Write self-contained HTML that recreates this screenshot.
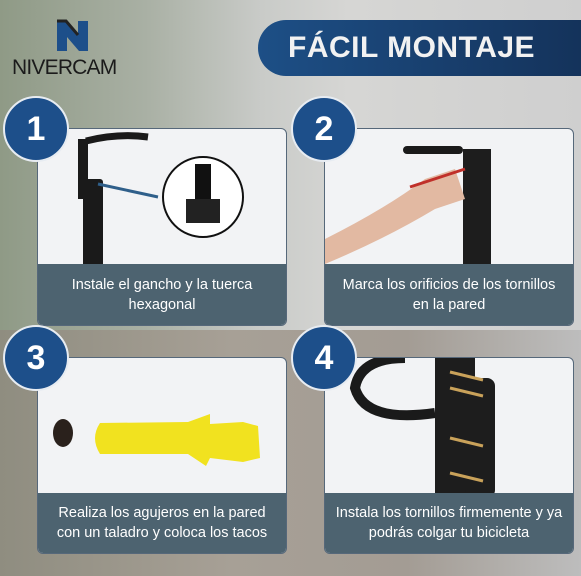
<!DOCTYPE html><html><head><style>
body{margin:0;width:581px;height:576px;overflow:hidden;position:relative;font-family:"Liberation Sans",sans-serif;
background:linear-gradient(90deg,#8f9a86 0%,#a9b0a4 25%,#c9cbc8 45%,#d6d6d4 60%,#cfcfcf 100%);}
.bg2{position:absolute;left:0;top:330px;width:581px;height:246px;background:linear-gradient(90deg,#8f8d80,#a7a096 40%,#a39c94 70%,#bdbdbd);}
.title{position:absolute;left:258px;top:20px;width:330px;height:56px;border-radius:28px 0 0 28px;background:linear-gradient(90deg,#1d4f86,#14325a);color:#f2f2f2;font-weight:bold;font-size:30px;line-height:56px;padding-left:30px;box-sizing:border-box;letter-spacing:0.5px}
.logo{position:absolute;left:12px;top:56px;font-size:21px;color:#1b1b1b;letter-spacing:-0.8px}
.panel{position:absolute;width:250px;background:#f2f3f5;border:1px solid #56687a;border-radius:6px;overflow:hidden;box-sizing:border-box}
.cap{position:absolute;left:0;right:0;bottom:0;background:#4d6370;color:#fff;font-size:14.5px;text-align:center;line-height:20px;display:flex;align-items:center;justify-content:center}
.num{position:absolute;width:62px;height:62px;border-radius:50%;background:#1d4f8a;border:2px solid #e7ecf2;color:#fff;font-weight:bold;font-size:34px;text-align:center;line-height:62px;box-sizing:content-box}
</style></head><body>
<div class="bg2"></div>
<svg style="position:absolute;left:55px;top:17px" width="36" height="36"><path d="M2 4h9l12 14V4h10v30h-9L12 20v14H2z" fill="#1d4f8a"/><path d="M2 4h9l12 14" fill="none" stroke="#222" stroke-width="3"/></svg>
<div class="logo">NIVERCAM</div>
<div class="title">FÁCIL MONTAJE</div>

<div class="panel" style="left:37px;top:128px;height:198px">
<svg width="250" height="140" style="position:absolute;left:0;top:0">
<rect x="40" y="10" width="10" height="60" fill="#1a1a1a"/><rect x="45" y="50" width="20" height="105" rx="3" fill="#1a1a1a"/>
<path d="M48 12 Q80 4 110 8" stroke="#1a1a1a" stroke-width="7" fill="none"/>
<path d="M60 55 L120 68" stroke="#2f5f8a" stroke-width="3"/>
<circle cx="165" cy="68" r="40" fill="#fff" stroke="#111" stroke-width="2"/>
<rect x="157" y="35" width="16" height="35" fill="#111"/><rect x="148" y="70" width="34" height="24" fill="#222"/>
</svg>
<div class="cap" style="height:61px">Instale el gancho y la tuerca<br>hexagonal</div></div>

<div class="panel" style="left:324px;top:128px;height:198px">
<svg width="250" height="140" style="position:absolute;left:0;top:0">
<rect x="78" y="17" width="60" height="8" rx="4" fill="#1a1a1a"/><rect x="138" y="20" width="28" height="115" fill="#1d1d1d"/>
<path d="M0 110 Q60 80 100 50 L130 40 L140 70 L110 80 Q60 110 0 135z" fill="#e2b9a2"/>
<path d="M85 58 L140 40" stroke="#c0302a" stroke-width="3"/>
</svg>
<div class="cap" style="height:61px">Marca los orificios de los tornillos<br>en la pared</div></div>

<div class="panel" style="left:37px;top:357px;height:197px">
<svg width="250" height="140" style="position:absolute;left:0;top:0">
<ellipse cx="25" cy="75" rx="10" ry="14" fill="#2a211c"/>
<path d="M62 65 L150 64 L172 56 L172 66 L205 64 L220 68 L222 100 L205 104 L172 100 L168 108 L150 96 L62 96 Q52 80 62 65z" fill="#f1e21f"/>
</svg>
<div class="cap" style="height:60px">Realiza los agujeros en la pared<br>con un taladro y coloca los tacos</div></div>

<div class="panel" style="left:324px;top:357px;height:197px">
<svg width="250" height="140" style="position:absolute;left:0;top:0">
<path d="M110 55 Q40 65 30 30 Q35 0 80 0" stroke="#1a1a1a" stroke-width="10" fill="none"/>
<rect x="110" y="0" width="40" height="140" fill="#1d1d1d"/><rect x="140" y="20" width="30" height="120" rx="8" fill="#1d1d1d"/>
<g stroke="#c9a25a" stroke-width="3"><path d="M125 14L158 22M125 30L158 38M125 80L158 88M125 115L158 123"/></g>
</svg>
<div class="cap" style="height:60px">Instala los tornillos firmemente y ya<br>podrás colgar tu bicicleta</div></div>

<div class="num" style="left:3px;top:96px">1</div>
<div class="num" style="left:291px;top:96px">2</div>
<div class="num" style="left:3px;top:325px">3</div>
<div class="num" style="left:291px;top:325px">4</div>
</body></html>
